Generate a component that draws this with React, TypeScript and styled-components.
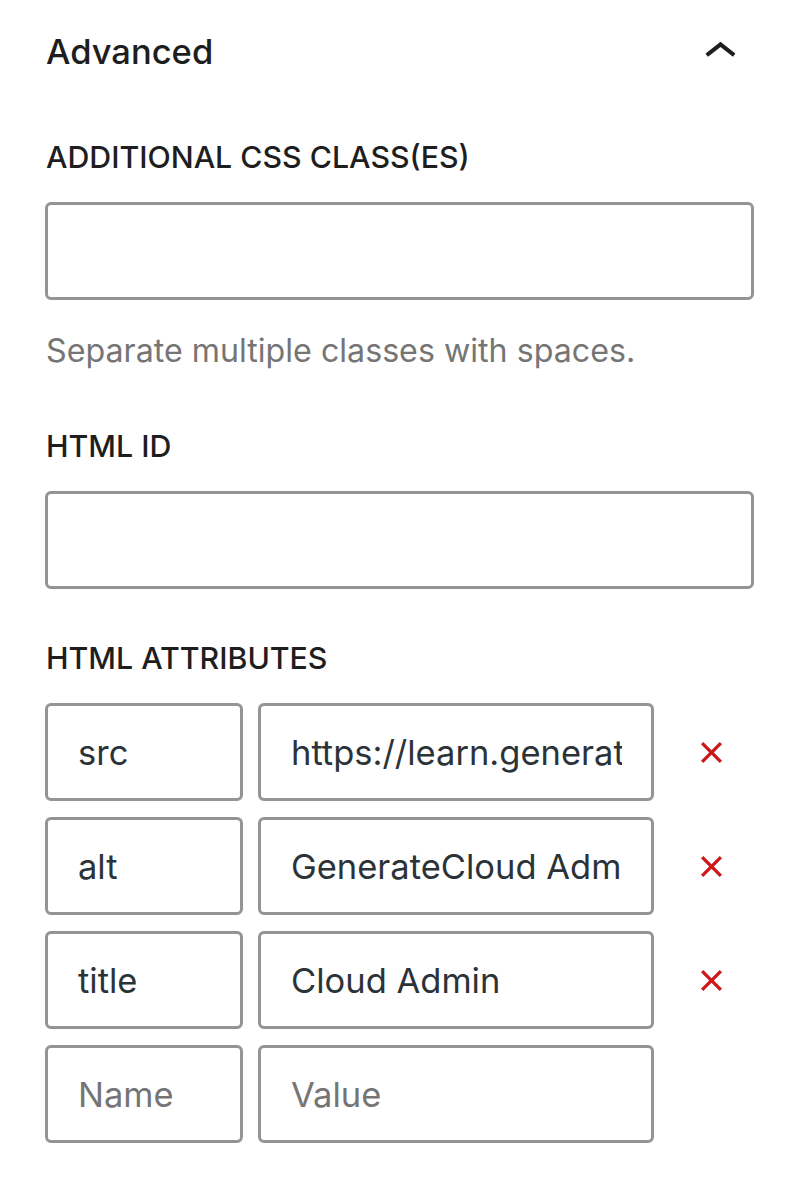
import React from 'react';
import styled, { createGlobalStyle } from 'styled-components';

const GlobalStyle = createGlobalStyle`
  html, body {
    margin: 0;
    padding: 0;
    background: #fff;
  }
  body {
    font-family: Inter, "Noto Sans", "Liberation Sans", sans-serif;
    color: #1e1e1e;
  }
  * {
    box-sizing: border-box;
  }
`;

const Panel = styled.section`
  display: flex;
  flex-direction: column;
  padding: 0 46px 40px 45px;
  width: 800px;
`;

const Header = styled.div`
  display: flex;
  align-items: center;
  justify-content: space-between;
  height: 104px;
`;

const Title = styled.h2`
  margin: 0 0 0 1px;
  font-size: 34.5px;
  line-height: 36px;
  font-weight: 500;
  color: #1e1e1e;
`;

const ToggleButton = styled.button`
  display: flex;
  align-items: center;
  justify-content: center;
  width: 65px;
  height: 65px;
  margin-right: 1px;
  padding: 0;
  border: 0;
  background: transparent;
  color: #1e1e1e;
  cursor: pointer;
`;

const Field = styled.div<{ $gap?: number }>`
  display: flex;
  flex-direction: column;
  margin-top: ${(p) => p.$gap ?? 0}px;
`;

const Label = styled.label`
  margin: 0 0 31px 1px;
  font-size: 30.3px;
  line-height: 28px;
  font-weight: 500;
  text-transform: uppercase;
  color: #1e1e1e;
`;

const TextInput = styled.input`
  display: block;
  width: 100%;
  height: 98px;
  padding: 0 29px 0 30px;
  border: 3px solid #949494;
  border-radius: 6px;
  background: #fff;
  font-family: inherit;
  font-size: 34.5px;
  color: #2c3338;
  outline: none;

  &::placeholder {
    color: #757575;
    opacity: 1;
  }
`;

const Help = styled.p`
  margin: 36px 0 0 1px;
  font-size: 32.2px;
  line-height: 30px;
  color: #757575;
`;

const AttrList = styled.div`
  display: flex;
  flex-direction: column;
  gap: 16px;
`;

const AttrRow = styled.div`
  display: grid;
  grid-template-columns: 198px 396px 1fr;
  column-gap: 15px;
  align-items: center;
`;

const RemoveButton = styled.button`
  justify-self: center;
  display: flex;
  align-items: center;
  justify-content: center;
  width: 53px;
  height: 53px;
  padding: 0;
  border: 0;
  background: transparent;
  color: #cc1818;
  cursor: pointer;
`;

const ChevronUp = () => (
  <svg width="65" height="65" viewBox="0 0 24 24" fill="currentColor">
    <path d="M6.5 12.4L12 8l5.5 4.4-.9 1.2L12 10l-4.6 3.6-1-1.2z" />
  </svg>
);

const CloseSmall = () => (
  <svg width="53" height="53" viewBox="0 0 24 24" fill="currentColor">
    <path d="M12 13.06l3.712 3.713 1.061-1.06L13.061 12l3.713-3.712-1.06-1.06L12 10.938 8.288 7.227l-1.061 1.06L10.939 12l-3.712 3.712 1.06 1.061L12 13.061z" />
  </svg>
);

interface IAttribute {
  name: string;
  value: string;
}

const attributes: IAttribute[] = [
  { name: 'src', value: 'https://learn.generatepress.com/cloud-admin.png' },
  { name: 'alt', value: 'GenerateCloud Admin' },
  { name: 'title', value: 'Cloud Admin' },
];

export default function App() {
  return (
    <>
      <GlobalStyle />
      <Panel>
        <Header>
          <Title>Advanced</Title>
          <ToggleButton aria-label="Collapse">
            <ChevronUp />
          </ToggleButton>
        </Header>

        <Field $gap={39}>
          <Label>Additional CSS class(es)</Label>
          <TextInput defaultValue="" />
        </Field>
        <Help>Separate multiple classes with spaces.</Help>

        <Field $gap={66}>
          <Label>HTML ID</Label>
          <TextInput defaultValue="" />
        </Field>

        <Field $gap={55}>
          <Label>HTML Attributes</Label>
          <AttrList>
            {attributes.map((attr) => (
              <AttrRow key={attr.name}>
                <TextInput defaultValue={attr.name} />
                <TextInput defaultValue={attr.value} />
                <RemoveButton aria-label={`Remove ${attr.name}`}>
                  <CloseSmall />
                </RemoveButton>
              </AttrRow>
            ))}
            <AttrRow>
              <TextInput placeholder="Name" />
              <TextInput placeholder="Value" />
            </AttrRow>
          </AttrList>
        </Field>
      </Panel>
    </>
  );
}
